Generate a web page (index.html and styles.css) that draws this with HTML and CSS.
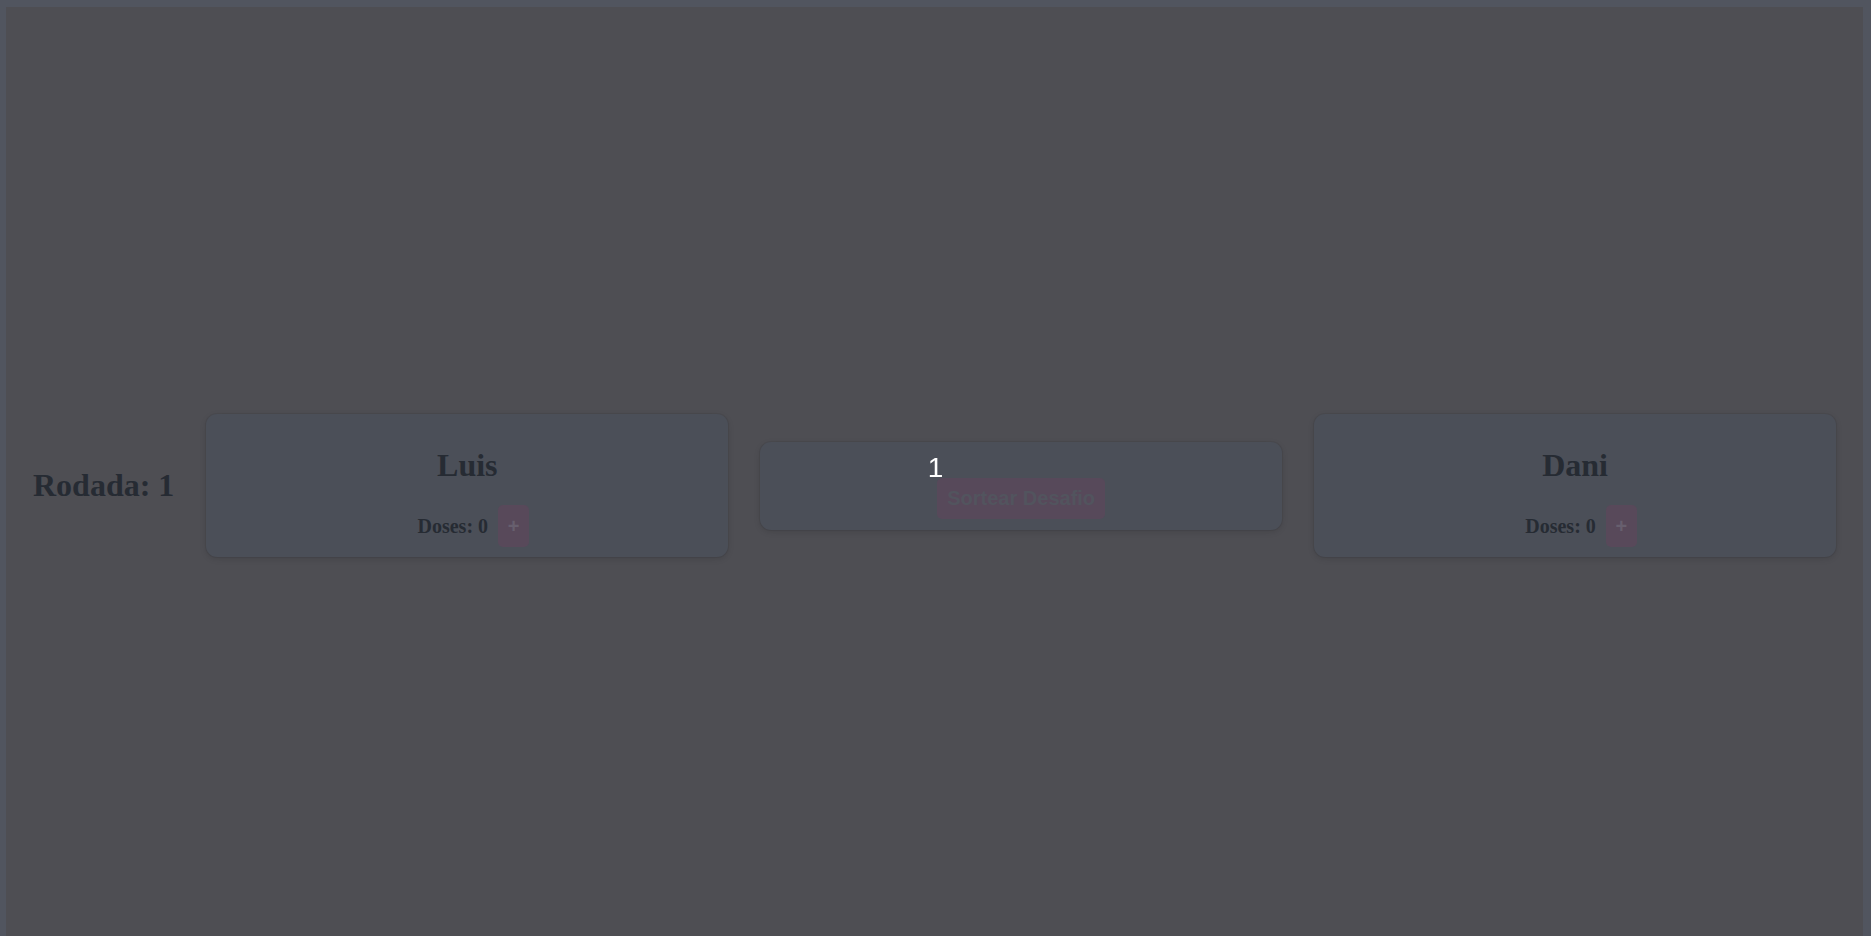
FILE: index.html
```html
<!DOCTYPE html>
<html lang="pt">
<head>
<meta charset="utf-8">
<title>Rodada</title>
<link rel="stylesheet" href="styles.css">
</head>
<body>
  <div class="frame">
    <div class="row">
      <h2 class="round">Rodada: 1</h2>
      <div class="card player">
        <h2 class="name">Luis</h2>
        <div class="doses">
          <span class="doses-label">Doses: 0</span>
          <button class="plus">+</button>
        </div>
      </div>
      <div class="card center">
        <button class="draw">Sortear Desafio</button>
      </div>
      <div class="card player">
        <h2 class="name">Dani</h2>
        <div class="doses">
          <span class="doses-label">Doses: 0</span>
          <button class="plus">+</button>
        </div>
      </div>
    </div>
  </div>
  <div class="countdown">1</div>
</body>
</html>
```

FILE: styles.css
```css
html, body {
  margin: 0;
  padding: 0;
  height: 100%;
  overflow: hidden;
}
body {
  background: #51555f;
  font-family: "Liberation Serif", "Times New Roman", serif;
  color: #262b33;
}
.frame {
  margin: 7px 8px 0 6px;
  height: calc(100vh - 7px);
  box-sizing: border-box;
  background: #4e4e53;
  padding-top: 28px;
  display: flex;
  align-items: center;
}
.row {
  flex: 1;
  display: flex;
  align-items: center;
  gap: 32px;
  padding: 0 27px;
}
.round {
  margin: 0;
  font-size: 32px;
  font-weight: bold;
  white-space: nowrap;
  color: #262b33;
}
.card {
  flex: 1;
  min-width: 0;
  background: #4b4f58;
  border-radius: 11px;
  box-shadow: 0 0 0 1px rgba(0,0,0,0.05), 0 2px 6px rgba(0,0,0,0.12);
  box-sizing: border-box;
  text-align: center;
}
.player {
  padding: 11px 20px 10px;
}
.name {
  margin: 23px 0 22px;
  font-size: 32px;
  font-weight: bold;
  line-height: 35px;
  color: #262b33;
}
.doses {
  display: flex;
  justify-content: center;
  align-items: center;
  gap: 10px;
  height: 42px;
  padding-left: 12px;
}
.doses-label {
  font-size: 20px;
  font-weight: bold;
  color: #262b33;
}
.plus {
  width: 31px;
  height: 42px;
  border: none;
  border-radius: 5px;
  background: #58495a;
  color: #675f6e;
  font-family: "Liberation Sans", Arial, sans-serif;
  font-size: 20px;
  font-weight: bold;
  padding: 0;
}
.center {
  padding: 36px 20px 11px;
}
.draw {
  height: 41px;
  padding: 0 10px;
  border: none;
  border-radius: 5px;
  background: #57495a;
  color: #52545e;
  font-family: "Liberation Sans", Arial, sans-serif;
  font-size: 20px;
  font-weight: bold;
}
.countdown {
  position: fixed;
  left: 50%;
  top: 50%;
  transform: translate(-50%, -50%);
  color: #ffffff;
  font-family: "Liberation Sans", Arial, sans-serif;
  font-size: 28px;
  line-height: 1;
}
```
